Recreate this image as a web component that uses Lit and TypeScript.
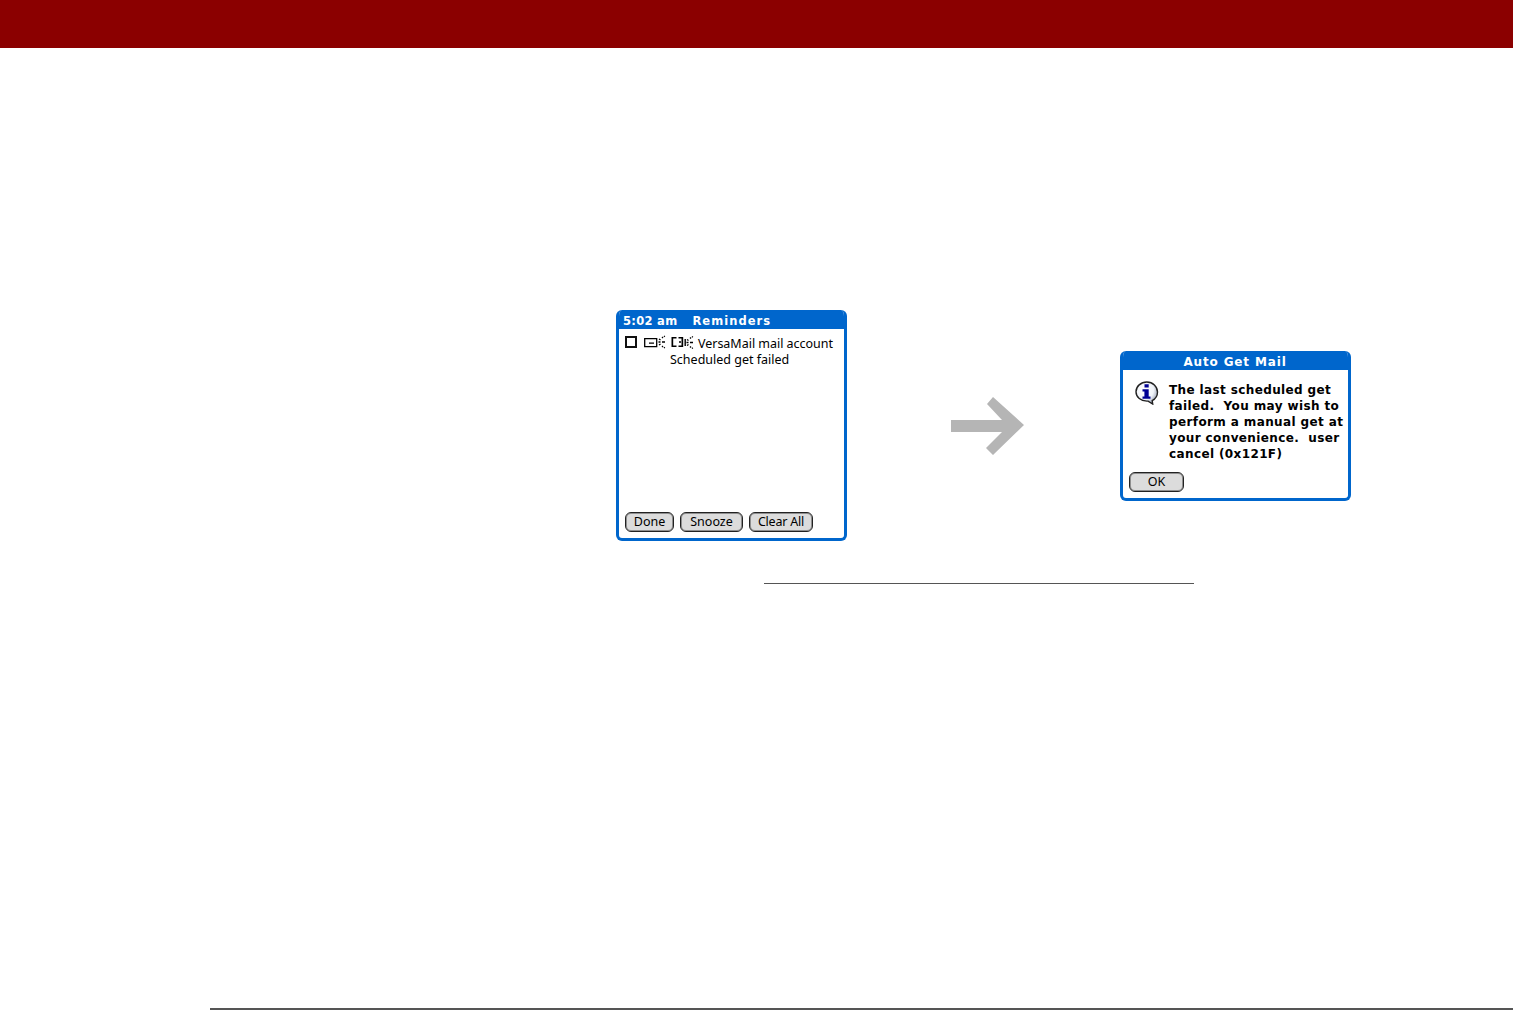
import { LitElement, html, css, svg } from "lit";
import { customElement } from "lit/decorators.js";

const sparks = svg`<path fill="none" stroke="#000" stroke-width="1.3" d="M0 6.500h2M0.500 3.500l1.500 1M0.500 9.500l1.500-1M3.500 1.500l1 1M3.500 11.500l1-1M3.500 6.500h3M5.500 0.500l.8.800M5.500 12.500l.8-.800"/>`;

const mailIcon = svg`<svg class="ic-mail" width="22" height="14" viewBox="0 0 22 14">
  <path fill="none" stroke="#000" stroke-width="1.300" d="M0.700 3.700h12v8h-12z"/>
  <path fill="#000" d="M5 7.500h5v1.300H5z"/>
  <g transform="translate(14.500 0.500)">${sparks}</g>
</svg>`;

const beamIcon = svg`<svg class="ic-beam" width="23" height="14" viewBox="0 0 23 14">
  <path fill="#000" d="M0.500 1h5v1.500H2.200v7H5.500V11h-5zM7.500 1h4.700v10H7.500V9.500h3v-7h-3zM8 5.300h2v1.400H8z"/>
  <path fill="#000" d="M13.500 3h1.400v7h-1.400z"/>
  <g transform="translate(15.500 0)">${sparks}</g>
</svg>`;

const infoIcon = svg`<svg width="24" height="24" viewBox="0 0 24 24">
  <defs>
    <radialGradient id="bub" cx="0.38" cy="0.36" r="0.72">
      <stop offset="0" stop-color="#ffffff"/>
      <stop offset="0.6" stop-color="#f1f4fa"/>
      <stop offset="1" stop-color="#8f98ad"/>
    </radialGradient>
  </defs>
  <path d="M11.800 1C17.800 1 22.500 5.400 22.500 11c0 3.900-2.300 7-5.300 8.600l.5 3.400-4.600-2.900h-1.300C6 20.100 1 16.200 1 10.800 1 5.400 5.800 1 11.800 1z" fill="url(#bub)" stroke="#222" stroke-width="1.400"/>
  <path d="M9.500 3.200h4.200v3.400H9.500z" fill="#000094"/>
  <path d="M7.500 8.200h6.200v7.300h1.800v2.200H7.500v-2.200h1.900v-5.100H7.500z" fill="#000094"/>
</svg>`;

@customElement("app-root")
export class AppRoot extends LitElement {
  static styles = css`
    :host {
      display: block;
      width: 1513px;
      height: 1010px;
      background: #fff;
      overflow: hidden;
      font-family: "DejaVu Sans", sans-serif;
      color: #000;
    }
    .top {
      height: 48px;
      background: #8b0000;
    }
    .figure {
      display: flex;
      align-items: center;
      margin-top: 262px;
      padding-left: 616px;
    }
    .screen {
      box-sizing: border-box;
      width: 231px;
      background: #fff;
      border: 3px solid #0066cc;
      border-top: 0;
      border-radius: 6px;
      display: flex;
      flex-direction: column;
      overflow: hidden;
      flex: none;
    }
    .bar {
      height: 19px;
      margin: 0 -3px;
      background: #0066cc;
      color: #fff;
      font-weight: 700;
      font-size: 12px;
      line-height: 23px;
      white-space: pre;
      flex: none;
    }
    .reminders { height: 231px; }
    .reminders .bar {
      padding-left: 7px;
      letter-spacing: 0.3px;
      font-size: 11.5px;
    }
    .bar .gap { margin-left: 15px; letter-spacing: 1.05px; }
    .rem-body {
      flex: 1;
      display: flex;
      flex-direction: column;
      justify-content: space-between;
      padding: 5px 0 6px 6px;
    }
    .rem-row { display: flex; align-items: flex-start; }
    .check {
      box-sizing: border-box;
      width: 12px;
      height: 12px;
      border: 2px solid #111;
      margin-top: 2px;
      flex: none;
    }
    .ic-mail { margin: 1px 0 0 7px; flex: none; }
    .ic-beam { margin: 2px 0 0 5px; flex: none; }
    .rem-text {
      margin-left: -24px;
      padding-top: 2px;
      font-family: "Noto Sans", sans-serif;
      font-size: 12.5px;
      line-height: 16px;
    }
    .first { padding-left: 28px; white-space: pre; letter-spacing: -0.02px; display: block; }
    .second { white-space: pre; display: block; }
    .rem-btns { display: flex; gap: 6px; }
    .btn {
      box-sizing: border-box;
      height: 20px;
      border: 1px solid #222;
      border-radius: 6px;
      background: #dcdcdc;
      box-shadow: inset 0 0 0 1px #8f8f8f;
      font-family: "Noto Sans", sans-serif;
      font-size: 12.5px;
      line-height: 18px;
      text-align: center;
      flex: none;
    }
    .b-done { width: 49px; }
    .b-snooze { width: 63px; }
    .b-clear { width: 64px; letter-spacing: -0.2px; }

    .arrow { display: block; flex: none; margin-left: 104px; }

    .alert {
      height: 150px;
      margin-left: 95px;
    }
    .alert .bar { text-align: center; font-size: 12px; letter-spacing: 0.85px; padding-right: 1px; }
    .alert-body {
      flex: 1;
      display: flex;
      flex-direction: column;
      justify-content: space-between;
      padding: 1px 0 5px 6px;
    }
    .alert-main { display: flex; align-items: flex-start; }
    .alert-main svg { flex: none; margin: 10px 0 0 6px; }
    .alert-msg {
      margin: 11px 0 0 10px;
      font-weight: 700;
      font-size: 12px;
      line-height: 16px;
      white-space: pre;
      letter-spacing: 0.38px;
    }
    .b-ok { width: 55px; }
    .alert-foot { display: flex; margin-bottom: 1px; }
    .rule {
      height: 1px;
      background: #555;
      width: 430px;
      margin: 42px 0 0 764px;
    }
    .foot {
      height: 2px;
      background: #555;
      margin: 424px 0 0 210px;
    }
  `;

  render() {
    return html`
      <div class="top"></div>
      <div class="figure">
        <div class="screen reminders">
          <div class="bar">5:02 am<span class="gap">Reminders</span></div>
          <div class="rem-body">
            <div class="rem-row">
              <div class="check"></div>
              ${mailIcon}
              ${beamIcon}
              <div class="rem-text">
                <span class="first">VersaMail mail account</span>
                <span class="second">Scheduled get failed</span>
              </div>
            </div>
            <div class="rem-btns">
              <div class="btn b-done">Done</div>
              <div class="btn b-snooze">Snooze</div>
              <div class="btn b-clear">Clear All</div>
            </div>
          </div>
        </div>
        <svg class="arrow" width="74" height="60" viewBox="0 0 74 60">
          <path fill="#b5b5b5" d="M0 24H51L36 8 42 1 73 29 42 59 35 52 51 36H0z"/>
        </svg>
        <div class="screen alert">
          <div class="bar">Auto Get Mail</div>
          <div class="alert-body">
            <div class="alert-main">
              ${infoIcon}
              <div class="alert-msg">The last scheduled get
failed.  You may wish to
perform a manual get at
your convenience.  user
cancel (0x121F)</div>
            </div>
            <div class="alert-foot"><div class="btn b-ok">OK</div></div>
          </div>
        </div>
      </div>
      <div class="rule"></div>
      <div class="foot"></div>
    `;
  }
}
